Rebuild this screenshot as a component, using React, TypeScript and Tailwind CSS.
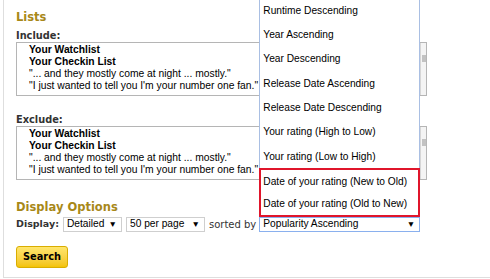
import React from 'react';

const listItems = [
  { label: 'Your Watchlist', bold: true },
  { label: 'Your Checkin List', bold: true },
  { label: '"... and they mostly come at night ... mostly."', bold: false },
  { label: '"I just wanted to tell you I\'m your number one fan."', bold: false },
];

const sortOptions = [
  'Runtime Descending',
  'Year Ascending',
  'Year Descending',
  'Release Date Ascending',
  'Release Date Descending',
  'Your rating (High to Low)',
  'Your rating (Low to High)',
];

const highlighted = ['Date of your rating (New to Old)', 'Date of your rating (Old to New)'];

const verdana = "font-['DejaVu_Sans',Verdana,sans-serif]";
const arial = "font-['Liberation_Sans',Arial,sans-serif]";

const ListBox = () => (
  <div className="relative h-[54px] w-[411px] border border-[#b5b5b5] bg-white">
    <div className={`${arial} flex flex-col pl-3 pt-px text-[10.3px] leading-[12px] text-black`}>
      {listItems.map(item => (
        <span key={item.label} className={item.bold ? 'font-bold' : ''}>{item.label}</span>
      ))}
    </div>
    <div className="absolute right-0 top-0 flex h-full w-[6px] flex-col items-center border-l border-[#d6d6d6] bg-[#f4f4f4]">
      <div className="mt-[12px] h-[7px] w-[4px] bg-[#c2c2c2]" />
    </div>
  </div>
);

const FakeSelect = ({ label, width, focused }: { label: string; width: string; focused?: boolean }) => (
  <div
    className={`${arial} flex h-[15px] items-center justify-between whitespace-nowrap bg-white pl-[3px] pr-[4px] text-[10.2px] leading-none text-black border ${focused ? 'border-[#8ab0ee]' : 'border-[#cfcfcf]'} ${width}`}
  >
    <span>{label}</span>
    <span className="text-[8.5px]">▼</span>
  </div>
);

const App = (): React.JSX.Element => {
  return (
    <div className="h-[279px] w-[490px] overflow-hidden bg-white">
      <div className="ml-[3px] h-[278px] border-b border-l border-[#dedede] pl-[12px] pt-[10px]">
        <h2 className={`${verdana} text-[11.5px] font-bold leading-[14px] text-[#a88819]`}>Lists</h2>
        <div className={`${verdana} mt-[6px] text-[9.8px] font-bold leading-[12px] text-[#333]`}>Include:</div>
        <ListBox />
        <div className={`${verdana} mt-[18px] text-[9.8px] font-bold leading-[12px] text-[#333]`}>Exclude:</div>
        <ListBox />
        <h2 className={`${verdana} mt-[20px] text-[11.5px] font-bold leading-[14px] text-[#a88819]`}>Display Options</h2>
        <div className="mt-[3px] flex items-center gap-[4px]">
          <span className={`${verdana} text-[9.5px] font-bold text-[#333]`}>Display:</span>
          <FakeSelect label="Detailed" width="w-[59px]" />
          <FakeSelect label="50 per page" width="w-[79px]" />
          <span className={`${verdana} mr-[-1px] text-[10px] text-[#333]`}>sorted by</span>
          <div className="relative">
            <FakeSelect label="Popularity Ascending" width="w-[161px]" focused />
            <div className={`${arial} absolute bottom-full left-0 w-[161px] border border-b-0 border-[#a9bfe3] bg-white text-[10.2px] text-black`}>
              {sortOptions.map(opt => (
                <div key={opt} className="flex h-[24.3px] items-center pl-[3px]">{opt}</div>
              ))}
              <div className="-mx-px border-2 border-[#e0152b]">
                {highlighted.map(opt => (
                  <div key={opt} className="flex h-[22.3px] items-center pl-[2px]">{opt}</div>
                ))}
              </div>
            </div>
          </div>
        </div>
        <button
          className={`${verdana} mt-[14px] h-[22px] w-[52px] rounded-[3px] border border-[#d9ad00] bg-linear-to-b from-[#ffe66b] to-[#f3c300] text-[9.8px] font-bold text-black`}
        >
          Search
        </button>
      </div>
    </div>
  );
};

export default App;
